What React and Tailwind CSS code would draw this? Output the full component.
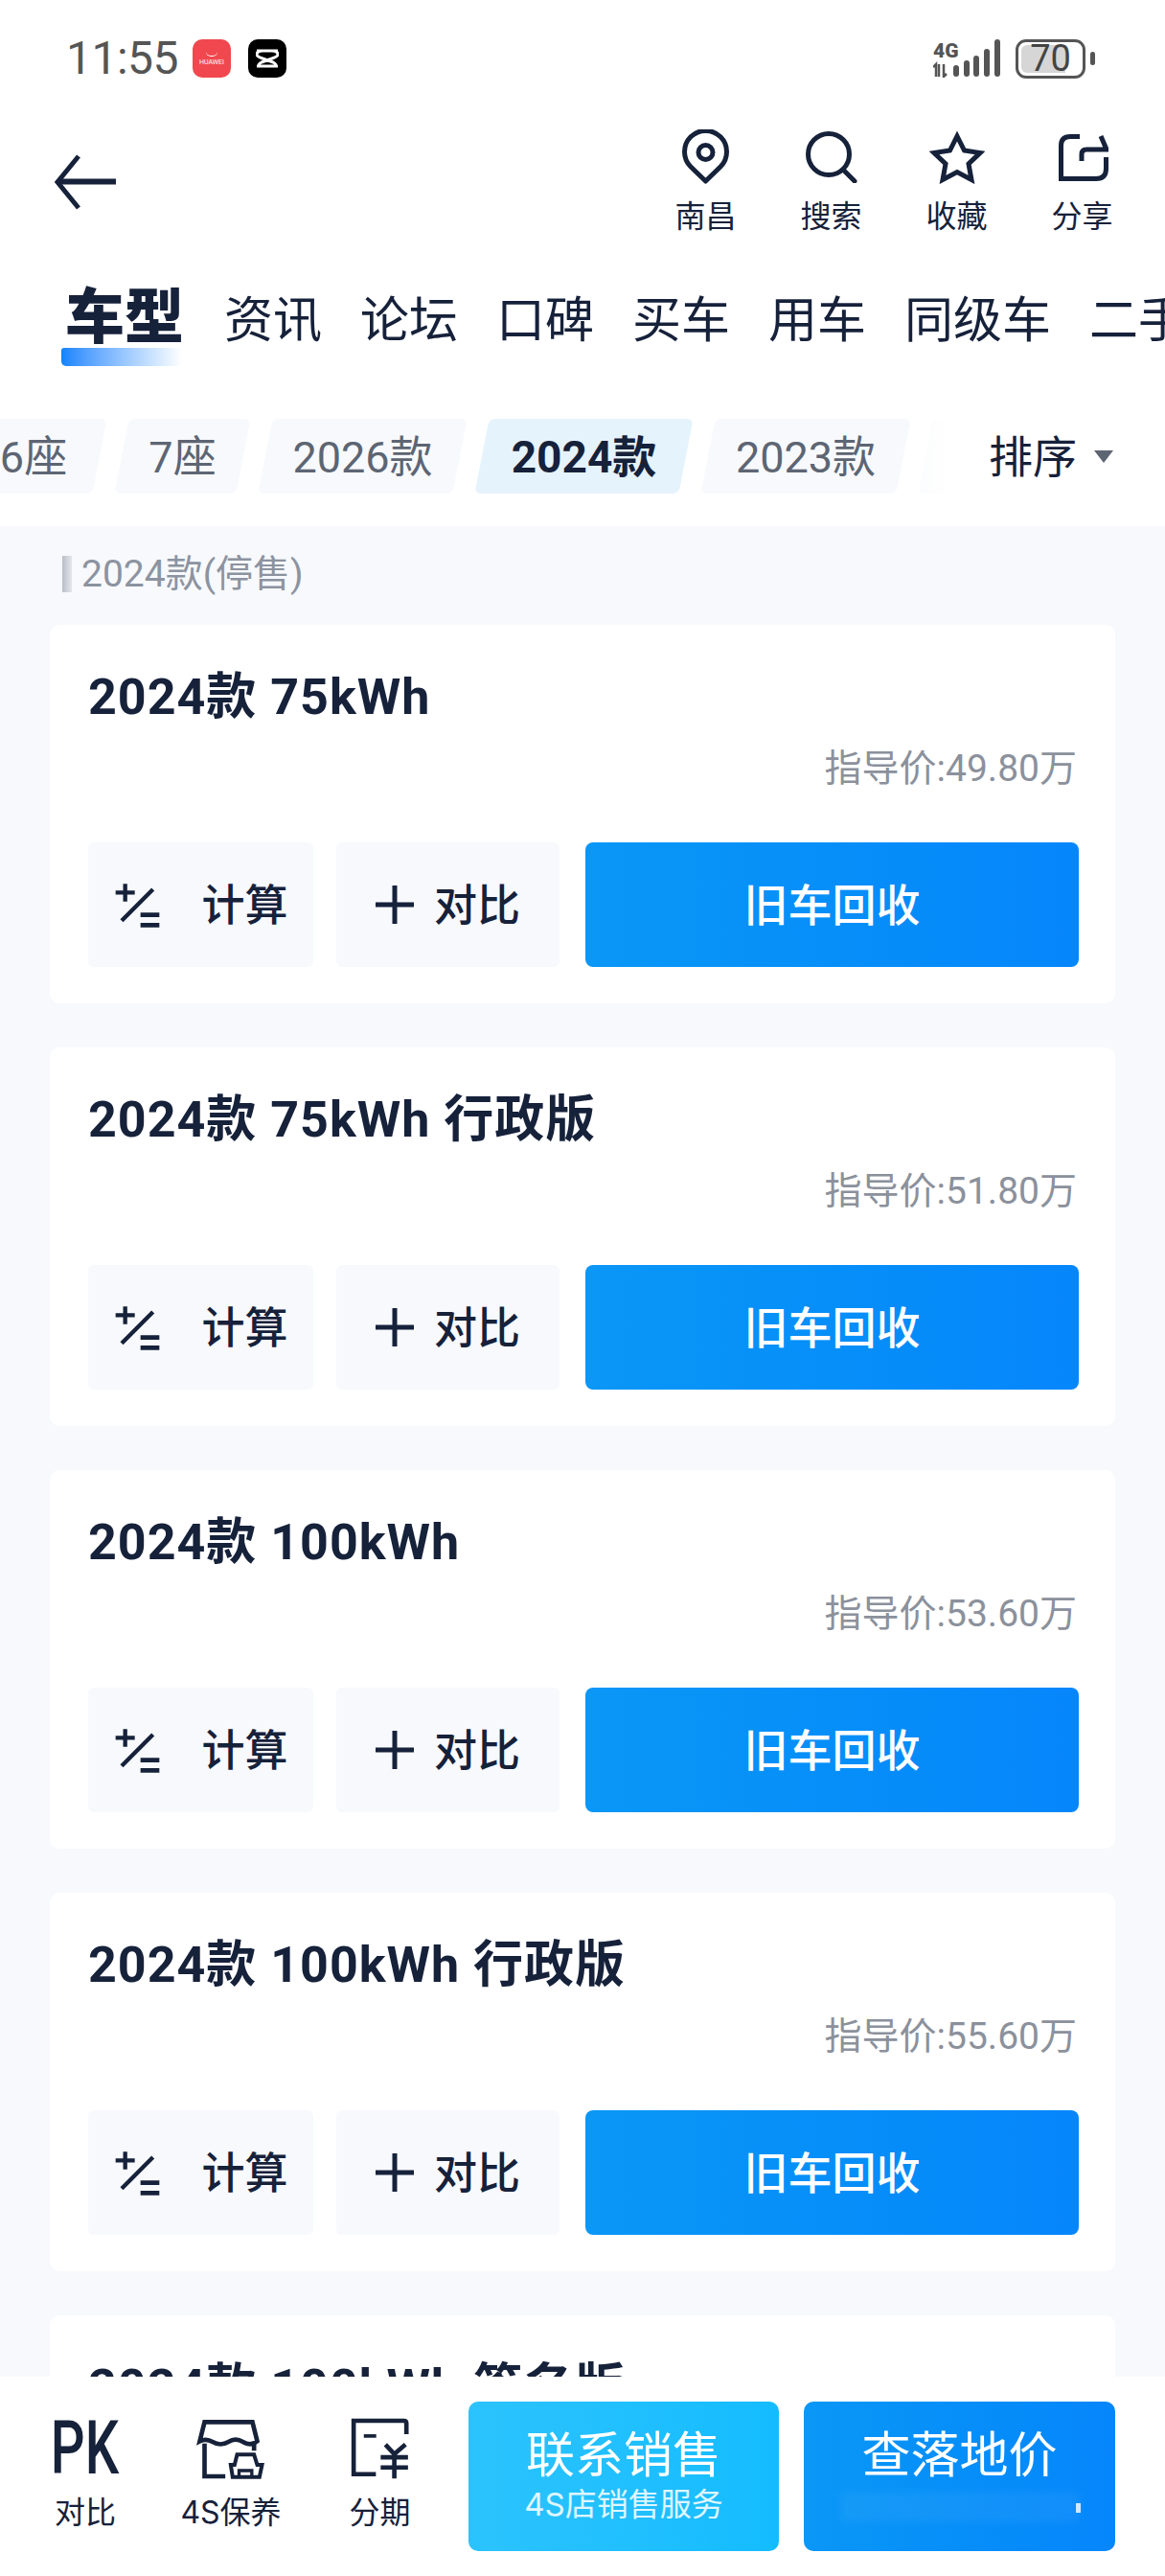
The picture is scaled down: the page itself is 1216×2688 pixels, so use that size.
const FONT = "font-['Inter','Noto_Sans_CJK_SC',sans-serif]";
const FONT_NUM = "font-['Roboto','Noto_Sans_CJK_SC',sans-serif]";

const TABS = ["资讯", "论坛", "口碑", "买车", "用车", "同级车", "二手车"];

const CHIPS = [
  { id: "six", label: "6座", width: "w-[138px]", first: true },
  { id: "seven", label: "7座", width: "w-[127px]" },
  { id: "y2026", label: "2026款", width: "w-[203px]" },
  { id: "y2024", label: "2024款", width: "w-[213px]", active: true },
  { id: "y2023", label: "2023款", width: "w-[204px]" },
  { id: "more", label: "", width: "w-[204px]" },
];

const CARDS = [
  { name: "2024款 75kWh", price: "49.80" },
  { name: "2024款 75kWh 行政版", price: "51.80" },
  { name: "2024款 100kWh", price: "53.60" },
  { name: "2024款 100kWh 行政版", price: "55.60" },
  { name: "2024款 100kWh 签名版", price: "58.60" },
];

const INK = "#16213a";

const PinIcon = () => (
  <svg width="49" height="58" viewBox="0 0 49 58" fill="none" stroke={INK} strokeWidth="5">
    <path d="M24.5 54 L9 39 A22 22 0 1 1 40 39 Z" strokeLinejoin="round" />
    <circle cx="24.5" cy="24" r="7.5" />
  </svg>
);

const SearchIcon = () => (
  <svg width="54" height="54" viewBox="0 0 54 54" fill="none" stroke={INK} strokeWidth="5">
    <circle cx="24" cy="24" r="21.5" />
    <path d="M39 40 L51 52" strokeLinecap="round" />
  </svg>
);

const StarIcon = () => (
  <svg width="58" height="56" viewBox="0 0 58 56" fill="none" stroke={INK} strokeWidth="5">
    <polygon points="29,6 36.5,21 53,23.5 41,35 44,51.5 29,43.5 14,51.5 17,35 5,23.5 21.5,21" />
  </svg>
);

const ShareIcon = () => (
  <svg width="54" height="51" viewBox="0 0 54 51" fill="none" stroke={INK} strokeWidth="5">
    <path d="M24 3.5 H14 Q4.5 3.5 4.5 13 V47.5 H41 Q51.5 47.5 51.5 37 V25" />
    <path d="M26 29 V22 Q26 17 31 17 H52 L46 3" />
  </svg>
);

const BackArrow = () => (
  <svg width="68" height="60" viewBox="0 0 68 60" fill="none" stroke={INK}>
    <path d="M27 3 L5 30 L27 57" strokeWidth="5" />
    <path d="M6 29.5 H66" strokeWidth="6" />
  </svg>
);

const CalcIcon = () => (
  <svg width="50" height="50" viewBox="110 145 150 150" fill="none" stroke={INK}>
    <path d="M118 182 H178 M148 155 V210 M137 270 L235 172" strokeWidth="13" />
    <path d="M196 252 H255 M196 284 H255" strokeWidth="14" />
  </svg>
);

const PlusIcon = () => (
  <svg width="40" height="40" viewBox="0 0 40 40" fill="none" stroke={INK} strokeWidth="5">
    <path d="M0 20 H40 M20 0 V40" />
  </svg>
);

const StoreIcon = () => (
  <svg width="72" height="65" viewBox="555 75 215 195" fill="none" stroke={INK} strokeWidth="14">
    <path d="M580 88 H730 L745 148 Q725 165 700 150 Q677 136 655 150 Q630 165 605 150 Q585 138 565 148 Z" />
    <path d="M580 155 V258 H645 M735 150 V178" />
    <path d="M682 190 H735 L745 222 H760 L752 260 H668 L662 222 H674 Z" strokeWidth="12" />
    <path d="M688 262 V240 H728 V262" strokeWidth="10" />
  </svg>
);

const YenIcon = () => (
  <svg width="65" height="68" viewBox="1030 75 195 205" fill="none" stroke={INK} strokeWidth="14">
    <path d="M1115 258 H1045 V90 H1203 Q1211 90 1211 98 V132" />
    <path d="M1077 138 H1116" strokeWidth="11" />
    <path d="M1145 165 L1173 195 L1208 165 M1130 205 H1216 M1130 237 H1216 M1173 195 V272" />
  </svg>
);

const SignalIcon = () => (
  <svg width="72" height="40" viewBox="0 0 72 40" fill="#555">
    <text x="0" y="19" fontFamily="Roboto, sans-serif" fontWeight="900" fontSize="21">4G</text>
    <path d="M3 39 V26 L0 29 M6 26 V39 M11 26 V39 L14 36" stroke="#555" strokeWidth="2.5" fill="none" />
    <rect x="21" y="27" width="6" height="12" rx="3" />
    <rect x="32" y="22" width="6" height="17" rx="3" />
    <rect x="42" y="17" width="6" height="22" rx="3" />
    <rect x="53" y="10" width="6" height="29" rx="3" />
    <rect x="64" y="0" width="6" height="39" rx="3" />
  </svg>
);

const CutIcon = () => (
  <svg width="24" height="22" viewBox="0 0 24 22" fill="none" stroke="#fff" strokeWidth="3">
    <path d="M1 3 H17 Q23 3 23 7 Q23 9 17 11 L6 15 Q2 17 4 19 H23 M23 3 H7 Q1 3 1 7 Q1 9 7 11 L18 15 Q22 17 20 19 H1" />
  </svg>
);

const StatusBar = () => (
  <div className="flex h-[122px] shrink-0 items-center pl-[69px] pr-[73px]">
    <span className="font-['Roboto',sans-serif] text-[48px] leading-none tracking-[-0.5px] text-[#555555]">
      11:55
    </span>
    <div className="ml-[15px] flex h-[40px] w-[40px] flex-col items-center justify-center rounded-[10px] bg-[#f0484e]">
      <div className="mb-[3px] h-[5px] w-[12px] rounded-b-full border-b border-white" />
      <span className="font-['Roboto',sans-serif] text-[7px] leading-none text-white">HUAWEI</span>
    </div>
    <div className="ml-[18px] flex h-[40px] w-[40px] items-center justify-center rounded-[10px] bg-black">
      <CutIcon />
    </div>
    <div className="ml-auto flex items-center">
      <SignalIcon />
      <div className="relative ml-[14px] flex h-[41px] w-[73px] items-center justify-center overflow-hidden rounded-[11px] border-[3px] border-[#555555]">
        <div className="absolute inset-y-[3px] left-[3px] w-[46px] rounded-l-[6px] bg-[#d6d6d6]" />
        <span className="relative font-['Roboto',sans-serif] text-[38px] leading-none text-[#444444]">70</span>
      </div>
      <div className="ml-[5px] h-[14px] w-[5px] rounded-full bg-[#555555]" />
    </div>
  </div>
);

const HeaderAction = ({ icon, label }) => (
  <div className="flex w-[131px] flex-col items-center">
    <div className="flex h-[60px] items-center justify-center">{icon}</div>
    <span className={`mt-[16px] text-[32px] leading-[32px] ${FONT} text-[#16213a]`}>{label}</span>
  </div>
);

const Header = () => (
  <div className="flex h-[133px] shrink-0 items-start pl-[55px] pr-[21px]">
    <div className="mt-[38px]">
      <BackArrow />
    </div>
    <div className="ml-auto mt-[12px] flex">
      <HeaderAction icon={<PinIcon />} label="南昌" />
      <HeaderAction icon={<SearchIcon />} label="搜索" />
      <HeaderAction icon={<StarIcon />} label="收藏" />
      <HeaderAction icon={<ShareIcon />} label="分享" />
    </div>
  </div>
);

const TabBar = () => (
  <div className={`mt-[38px] flex h-[97px] shrink-0 gap-[40px] overflow-hidden whitespace-nowrap pl-[68px] ${FONT}`}>
    <div className="relative mr-[2px] h-[97px] w-[124px] shrink-0">
      <div className="absolute bottom-[8px] left-[-4px] h-[19px] w-[126px] rounded-l-[5px] rounded-tl-[3px] bg-gradient-to-r from-[#0784fb] to-[#ffffff]" />
      <span className="relative block text-[62px] font-black leading-[76px] text-[#16213a]">车型</span>
    </div>
    {TABS.map((tab) => (
      <span key={tab} className="shrink-0 pt-[10px] text-[51px] leading-[62px] text-[#16213a]">
        {tab}
      </span>
    ))}
  </div>
);

const FilterChip = ({ label, width, active, first }) => (
  <div className={`relative flex h-[78px] shrink-0 items-center justify-center ${width} ${first ? "-ml-[34px]" : ""}`}>
    <div className={`absolute inset-0 -skew-x-[11deg] rounded-[6px] ${active ? "bg-[#e5f3fc]" : "bg-[#f7f9fc]"}`} />
    <span
      className={`relative pt-[2px] leading-none ${
        active ? "text-[46px] font-bold text-[#16213a]" : "text-[45px] text-[#5d6573]"
      }`}
    >
      {label}
    </span>
  </div>
);

const FilterBar = () => (
  <div className={`mt-[47px] flex h-[78px] shrink-0 items-center ${FONT_NUM}`}>
    <div className="relative flex h-[78px] w-[990px] shrink-0 gap-[23px] overflow-hidden">
      {CHIPS.map(({ id, ...chip }) => (
        <FilterChip key={id} {...chip} />
      ))}
      <div className="absolute inset-y-0 right-0 w-[40px] bg-gradient-to-r from-white/40 to-white" />
    </div>
    <span className={`ml-[42px] text-[46px] leading-none text-[#16213a] ${FONT}`}>排序</span>
    <div className="ml-[18px] h-0 w-0 border-x-[10px] border-t-[13px] border-x-transparent border-t-[#5d6573]" />
  </div>
);

const ModelCard = ({ name, price }) => (
  <div className={`mx-[52px] h-[395px] shrink-0 rounded-[10px] bg-white pl-[40px] pr-[38px] pt-[46px] ${FONT}`}>
    <h3 className={`text-[52px] font-bold leading-[60px] tracking-[1px] text-[#16213a] ${FONT_NUM}`}>{name}</h3>
    <p className={`mt-[20px] pr-[2px] text-right text-[39px] leading-[48px] text-[#8b919c] ${FONT_NUM}`}>指导价:{price}万</p>
    <div className="mt-[53px] flex h-[130px]">
      <div className="flex w-[235px] items-center justify-center gap-[42px] rounded-[6px] bg-[#f7f9fc]">
        <CalcIcon />
        <span className="text-[45px] font-medium leading-none text-[#16213a]">计算</span>
      </div>
      <div className="ml-[24px] flex w-[233px] items-center justify-center gap-[21px] rounded-[6px] bg-[#f7f9fc]">
        <PlusIcon />
        <span className="text-[45px] font-medium leading-none text-[#16213a]">对比</span>
      </div>
      <div className="ml-[27px] flex flex-1 items-center justify-center rounded-[8px] bg-gradient-to-r from-[#0a97f6] to-[#0686fb]">
        <span className="text-[46px] font-medium leading-none text-white">旧车回收</span>
      </div>
    </div>
  </div>
);

const CarList = () => (
  <div className="mt-[34px] flex min-h-0 flex-1 flex-col gap-[46px] overflow-hidden bg-[#f7f9fc]">
    <div className={`-mb-[13px] ml-[65px] mt-[30px] flex h-[40px] shrink-0 items-center ${FONT_NUM}`}>
      <div className="h-[38px] w-[10px] bg-gradient-to-r from-[#b9bec8] to-[#e4e7ec]" />
      <span className="ml-[10px] text-[39px] leading-none text-[#8c93a0]">2024款(停售)</span>
    </div>
    {CARDS.map((card) => (
      <ModelCard key={card.name} {...card} />
    ))}
  </div>
);

const BottomItem = ({ icon, label, width }) => (
  <div className={`flex shrink-0 flex-col items-center ${width}`}>
    <div className="flex h-[68px] items-center justify-center">{icon}</div>
    <span className="mt-[17px] text-[32px] leading-[32px] text-[#16213a]">{label}</span>
  </div>
);

const BottomBar = () => (
  <div className={`flex h-[208px] shrink-0 bg-white pt-[26px] ${FONT}`}>
    <div className="flex pt-[15px]">
      <BottomItem
        width="w-[178px]"
        label="对比"
        icon={
          <span className="inline-block origin-center scale-x-[0.72] font-['Roboto',sans-serif] text-[78px] font-medium leading-none text-[#16213a]">
            PK
          </span>
        }
      />
      <BottomItem width="w-[126px]" label="4S保养" icon={<StoreIcon />} />
      <BottomItem width="w-[185px]" label="分期" icon={<YenIcon />} />
    </div>
    <div className="flex h-[156px] w-[324px] flex-col items-center rounded-[10px] bg-gradient-to-r from-[#2bc3fd] to-[#13bcff] pt-[26px] text-white">
      <span className="text-[51px] leading-[60px]">联系销售</span>
      <span className="mt-[2px] text-[33px] leading-[38px] text-white/85">4S店销售服务</span>
    </div>
    <div className="relative ml-[26px] flex h-[156px] w-[325px] flex-col items-center rounded-[10px] bg-gradient-to-r from-[#0a97f6] to-[#0686fb] pt-[26px] text-white">
      <span className="text-[51px] leading-[60px]">查落地价</span>
      <div className="mt-[8px] h-[32px] w-[250px] bg-white/5 blur-[5px]" />
      <div className="absolute right-[36px] top-[106px] h-[10px] w-[5px] bg-white/80" />
    </div>
  </div>
);

export default function App() {
  return (
    <div className="flex h-[2688px] w-[1216px] flex-col overflow-hidden bg-white">
      <StatusBar />
      <Header />
      <TabBar />
      <FilterBar />
      <CarList />
      <BottomBar />
    </div>
  );
}
